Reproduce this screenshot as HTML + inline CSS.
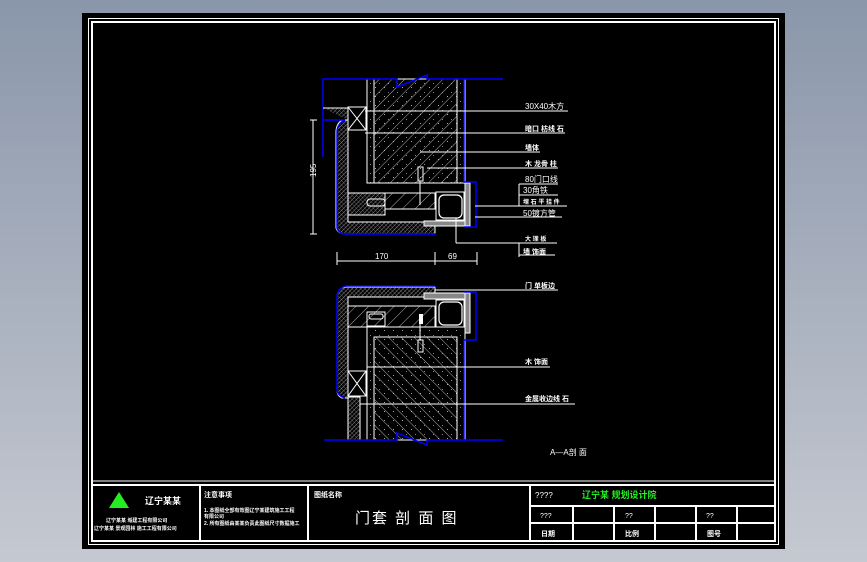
<!DOCTYPE html>
<html><head><meta charset="utf-8"><style>
html,body{margin:0;padding:0;}
body{width:867px;height:562px;overflow:hidden;background:linear-gradient(#8a96aa,#c5c9d1);font-family:"Liberation Sans","Noto Sans CJK SC",sans-serif;}
svg{position:absolute;left:0;top:0}
text{font-family:"Liberation Sans","Noto Sans CJK SC",sans-serif;fill:#fff}
</style></head><body>
<svg width="867" height="562" viewBox="0 0 867 562">
<defs>
<pattern id="h1" width="9" height="9" patternUnits="userSpaceOnUse" patternTransform="rotate(45)"><line x1="0" y1="0" x2="0" y2="9" stroke="#ddd" stroke-width="0.8"/></pattern>
<pattern id="h2" width="9" height="9" patternUnits="userSpaceOnUse" patternTransform="rotate(-45)"><line x1="0" y1="0" x2="0" y2="9" stroke="#ddd" stroke-width="0.8"/></pattern>
<pattern id="xh" width="3" height="3" patternUnits="userSpaceOnUse" patternTransform="rotate(45)"><line x1="0" y1="0" x2="0" y2="3" stroke="#ccc" stroke-width="0.7"/><line x1="0" y1="0" x2="3" y2="0" stroke="#999" stroke-width="0.5"/></pattern>
<pattern id="gr" width="9" height="9" patternUnits="userSpaceOnUse"><rect x="1" y="2" width="1" height="1" fill="#888"/><rect x="6" y="6" width="1" height="1" fill="#aaa"/></pattern>
</defs>
<rect x="82" y="13" width="703" height="536" fill="#000"/>
<rect x="88.5" y="18.5" width="690" height="526" fill="none" stroke="#fff" stroke-width="1"/>
<rect x="92" y="22" width="683" height="519" fill="none" stroke="#fff" stroke-width="2"/>
<line x1="92" y1="481" x2="775" y2="481" stroke="#fff" stroke-width="1"/>
<line x1="92" y1="485" x2="775" y2="485" stroke="#fff" stroke-width="2"/>
<g stroke="#fff" stroke-width="2">
<line x1="200" y1="485" x2="200" y2="541"/><line x1="308" y1="485" x2="308" y2="541"/><line x1="530" y1="485" x2="530" y2="541"/>
<line x1="530" y1="506" x2="775" y2="506"/><line x1="530" y1="523" x2="775" y2="523"/>
<line x1="573" y1="506" x2="573" y2="541"/><line x1="614" y1="506" x2="614" y2="541"/><line x1="655" y1="506" x2="655" y2="541"/><line x1="696" y1="506" x2="696" y2="541"/><line x1="737" y1="506" x2="737" y2="541"/>
</g>
<polygon points="109,508 119,492 129,508" fill="#22ee22"/>
<text x="145" y="504" font-size="9" font-weight="bold">辽宁某某</text>
<text x="106" y="522" font-size="5" font-weight="bold">辽宁某某 城建工程有限公司</text>
<text x="94" y="530" font-size="5" font-weight="bold">辽宁某某 景观园林 施工工程有限公司</text>
<text x="204" y="497" font-size="7" font-weight="bold">注意事项</text>
<text x="204" y="512" font-size="5" font-weight="bold">1. 本图纸全部有效图辽宁某建筑施工工程</text>
<text x="204" y="518" font-size="5" font-weight="bold">有限公司</text>
<text x="204" y="525" font-size="5" font-weight="bold">2. 所有图纸由某某负责此图纸尺寸数据施工</text>
<text x="314" y="497" font-size="7" font-weight="bold">图纸名称</text>
<text x="355" y="523" font-size="15" letter-spacing="2">门套 剖 面 图</text>
<text x="535" y="498" font-size="8">????</text>
<text x="582" y="498" font-size="9" font-weight="bold" style="fill:#22ee22">辽宁某 规划设计院</text>
<text x="540" y="518" font-size="7">???</text><text x="625" y="518" font-size="7">??</text><text x="706" y="518" font-size="7">??</text>
<text x="541" y="536" font-size="7" font-weight="bold">日期</text><text x="625" y="536" font-size="7" font-weight="bold">比例</text><text x="707" y="536" font-size="7" font-weight="bold">图号</text>

<!-- TOP SECTION -->
<rect x="367" y="79" width="98" height="104" fill="url(#gr)" stroke="#fff" stroke-width="1"/>
<rect x="374" y="79" width="83" height="104" fill="url(#h1)" stroke="#fff" stroke-width="1"/>
<polyline points="323,157 323,79 397,79 397,87 427,75 427,79 503,79" fill="none" stroke="#00f" stroke-width="1.5"/>
<path d="M323,108 L348,108 L348,120 L342,120 Q336,124 336,132 L336,228 Q338,234 346,234 L348,234 L435,234 L435,222 L348,222 L348,120" fill="url(#xh)" stroke="#fff" stroke-width="1"/>
<path d="M345,120 Q337,124 337,132 L337,228 Q339,234 346,234 L436,234" fill="none" stroke="#00f" stroke-width="1.5"/>
<line x1="323" y1="120" x2="345" y2="120" stroke="#00f" stroke-width="1.5"/>
<rect x="348" y="107" width="18" height="23" fill="none" stroke="#fff"/>
<line x1="348" y1="107" x2="366" y2="130" stroke="#fff"/><line x1="366" y1="107" x2="348" y2="130" stroke="#fff"/>
<rect x="348" y="193" width="37" height="22" fill="url(#xh)" stroke="#fff"/>
<rect x="385" y="193" width="50" height="16" fill="url(#h1)" stroke="#fff"/>
<rect x="367" y="199" width="18" height="7" rx="3" fill="none" stroke="#fff"/>
<line x1="348" y1="222" x2="435" y2="222" stroke="#fff"/>
<rect x="436" y="192" width="28" height="28" fill="none" stroke="#fff"/>
<rect x="439" y="195" width="23" height="23" rx="5" fill="none" stroke="#fff" stroke-width="1.2"/>
<rect x="424" y="221" width="44" height="5" fill="#888" stroke="#fff"/>
<rect x="465" y="183" width="5" height="43" fill="#888" stroke="#fff"/>
<polyline points="464,79 464,182 476,182 476,227 464,227" fill="none" stroke="#00f" stroke-width="1.5"/>
<rect x="418" y="167" width="5" height="14" fill="none" stroke="#fff"/><line x1="420" y1="181" x2="420" y2="205" stroke="#fff"/>
<g stroke="#fff" stroke-width="1">
<line x1="365" y1="111" x2="568" y2="111"/><line x1="365" y1="133" x2="565" y2="133"/><line x1="420" y1="152" x2="540" y2="152"/><line x1="427" y1="168" x2="558" y2="168"/>
<line x1="519" y1="184" x2="558" y2="184"/><line x1="519" y1="184" x2="519" y2="206"/><line x1="519" y1="195" x2="558" y2="195"/>
<line x1="475" y1="206" x2="567" y2="206"/><line x1="475" y1="217" x2="562" y2="217"/>
<line x1="456" y1="218" x2="456" y2="243"/><line x1="456" y1="243" x2="557" y2="243"/><line x1="519" y1="243" x2="519" y2="257"/><line x1="519" y1="255" x2="555" y2="255"/>
<line x1="313" y1="120" x2="313" y2="234"/><line x1="310" y1="120" x2="317" y2="120"/><line x1="310" y1="234" x2="317" y2="234"/>
<line x1="337" y1="261" x2="477" y2="261"/><line x1="337" y1="252" x2="337" y2="265"/><line x1="435" y1="252" x2="435" y2="265"/><line x1="477" y1="252" x2="477" y2="265"/>
</g>
<g font-size="8">
<text x="525" y="109">30X40木方</text><text x="525" y="131" font-size="7" font-weight="bold">暗口 枋线 石</text><text x="525" y="150" font-size="7" font-weight="bold">墙体</text><text x="525" y="166" font-size="7" font-weight="bold">木 龙骨 柱</text>
<text x="525" y="182">80门口线</text><text x="523" y="193">30角铁</text><text x="523" y="204" font-size="6" font-weight="bold">埋 石 平 挂 件</text><text x="523" y="216">50镀方管</text>
<text x="525" y="241" font-size="6" font-weight="bold">大 理 板</text><text x="523" y="254" font-size="7" font-weight="bold">墙 饰面</text>
<text x="307" y="186" transform="rotate(-90 307 177)">195</text>
<text x="375" y="259">170</text><text x="448" y="259">69</text>
</g>

<!-- BOTTOM SECTION -->
<rect x="367" y="327" width="98" height="113" fill="url(#gr)" stroke="#fff"/>
<rect x="374" y="337" width="83" height="103" fill="url(#h2)" stroke="#fff"/>
<path d="M346,287 L348,287 L435,287 L435,297 L348,297 L348,398 L342,398 Q337,396 337,390 L337,296 Q338,288 346,287Z" fill="url(#xh)" stroke="#fff"/>
<path d="M436,287 L435,286 L346,286 Q338,288 337,296 L337,390 Q338,396 345,398" fill="none" stroke="#00f" stroke-width="1.5"/>
<rect x="348" y="306" width="87" height="21" fill="url(#h1)" stroke="#fff"/>
<rect x="367" y="312" width="18" height="14" fill="none" stroke="#fff"/><rect x="369" y="314" width="14" height="5" rx="2" fill="none" stroke="#fff"/>
<rect x="436" y="300" width="28" height="27" fill="none" stroke="#fff"/>
<rect x="439" y="302" width="23" height="23" rx="5" fill="none" stroke="#fff" stroke-width="1.2"/>
<rect x="424" y="293" width="44" height="6" fill="#888" stroke="#fff"/>
<rect x="465" y="293" width="5" height="40" fill="#888" stroke="#fff"/>
<polyline points="464,440 464,340 476,340 476,292 464,292" fill="none" stroke="#00f" stroke-width="1.5"/>
<rect x="419" y="314" width="4" height="10" fill="#fff"/><rect x="418" y="340" width="5" height="12" fill="none" stroke="#fff"/><line x1="420" y1="324" x2="420" y2="340" stroke="#fff"/>
<rect x="348" y="371" width="18" height="25" fill="none" stroke="#fff"/>
<line x1="348" y1="371" x2="366" y2="396" stroke="#fff"/><line x1="366" y1="371" x2="348" y2="396" stroke="#fff"/>
<rect x="348" y="397" width="12" height="43" fill="url(#xh)" stroke="#fff"/>
<polyline points="324,440 397,440 397,433 427,445 427,440 503,440" fill="none" stroke="#00f" stroke-width="1.5"/>
<g stroke="#fff"><line x1="435" y1="290" x2="558" y2="290"/><line x1="367" y1="367" x2="550" y2="367"/><line x1="360" y1="404" x2="575" y2="404"/></g>
<g font-size="7" font-weight="bold"><text x="525" y="288">门 单板边</text><text x="525" y="364">木 饰面</text><text x="525" y="401">金属收边线 石</text>
<text x="550" y="455" font-size="8" font-weight="normal">A—A剖 面</text></g>
</svg>
</body></html>
